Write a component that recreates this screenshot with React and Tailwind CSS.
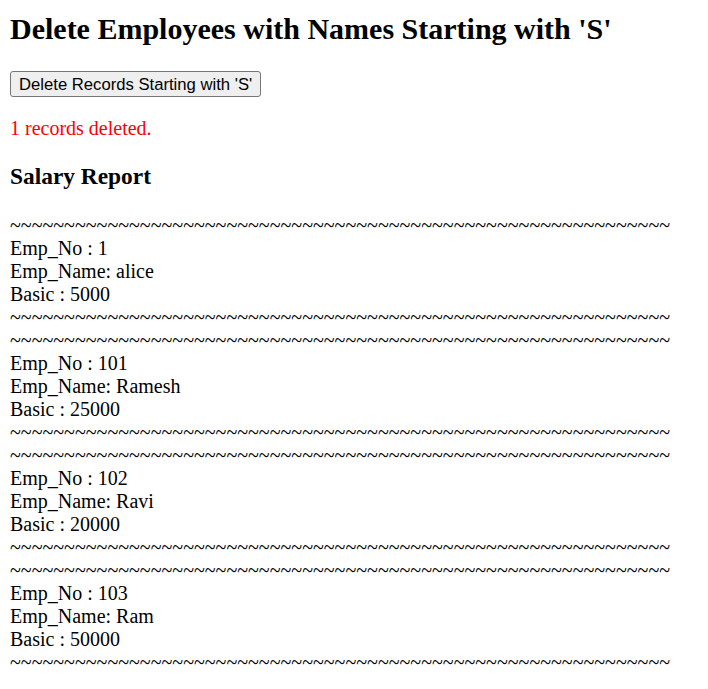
// Salary report page: delete employees whose names start with 'S'.

const TILDES = '~'.repeat(61)

const employees = [
  { no: 1, name: 'alice', basic: 5000 },
  { no: 101, name: 'Ramesh', basic: 25000 },
  { no: 102, name: 'Ravi', basic: 20000 },
  { no: 103, name: 'Ram', basic: 50000 },
]

export default function App() {
  return (
    <div className="min-h-screen bg-white text-black px-[10px] pt-[12px] font-['Liberation_Serif','Times_New_Roman',serif]">
      <h1 className="text-[30px] font-bold leading-[34.5px]">
        Delete Employees with Names Starting with 'S'
      </h1>

      <button
        type="button"
        className="mt-[24.5px] h-[26px] px-[8px] border border-[#767676] rounded-[3px] bg-[#efefef] text-[16.67px] leading-[19px] text-black font-['Liberation_Sans',Arial,sans-serif]"
      >
        Delete Records Starting with 'S'
      </button>

      <p className="mt-[20px] text-[20px] leading-[23px] text-[#ff0000]">1 records deleted.</p>

      <h3 className="mt-[23px] text-[23.4px] font-bold leading-[27px]">Salary Report</h3>

      <div className="mt-[23.5px] text-[20px] leading-[23px]">
        {employees.map(e => (
          <div key={e.no}>
            <div>{TILDES}</div>
            <div>Emp_No : {e.no}</div>
            <div>Emp_Name: {e.name}</div>
            <div>Basic : {e.basic}</div>
            <div>{TILDES}</div>
          </div>
        ))}
      </div>
    </div>
  )
}
